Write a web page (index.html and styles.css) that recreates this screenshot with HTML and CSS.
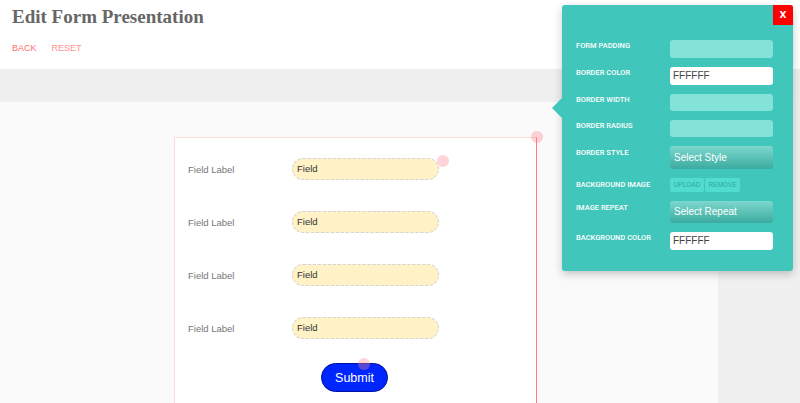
FILE: index.html
```html
<!DOCTYPE html>
<html>
<head>
<meta charset="utf-8">
<link rel="stylesheet" href="styles.css">
</head>
<body>
<header class="header">
  <h1 class="title">Edit Form Presentation</h1>
  <nav class="nav">
    <a class="nav-link back">BACK</a>
    <a class="nav-link reset">RESET</a>
  </nav>
</header>
<div class="band"></div>
<div class="main">
  <div class="canvas">
    <div class="form-card">
      <span class="dot dot-card"></span>
      <div class="row">
        <span class="flabel">Field Label</span>
        <div class="finput">Field<span class="dot dot-field"></span></div>
      </div>
      <div class="row">
        <span class="flabel">Field Label</span>
        <div class="finput">Field</div>
      </div>
      <div class="row">
        <span class="flabel">Field Label</span>
        <div class="finput">Field</div>
      </div>
      <div class="row">
        <span class="flabel">Field Label</span>
        <div class="finput">Field</div>
      </div>
      <div class="submit-wrap">
        <button class="submit">Submit<span class="dot dot-submit"></span></button>
      </div>
    </div>
  </div>
  <div class="side"></div>
</div>

<div class="panel">
  <button class="close">X</button>
  <div class="pgrid">
    <span class="plabel">FORM PADDING</span>
    <div class="pinput"></div>
    <span class="plabel">BORDER COLOR</span>
    <div class="pinput white">FFFFFF</div>
    <span class="plabel">BORDER WIDTH</span>
    <div class="pinput h17"></div>
    <span class="plabel">BORDER RADIUS</span>
    <div class="pinput h17"></div>
    <span class="plabel sel">BORDER STYLE</span>
    <div class="pselect tall">Select Style</div>
    <span class="plabel small">BACKGROUND IMAGE</span>
    <div class="pbtns"><span class="pbtn">UPLOAD</span><span class="pbtn">REMOVE</span></div>
    <span class="plabel sel">IMAGE REPEAT</span>
    <div class="pselect">Select Repeat</div>
    <span class="plabel">BACKGROUND COLOR</span>
    <div class="pinput white">FFFFFF</div>
  </div>
</div>
</body>
</html>
```
FILE: styles.css
```css
* { box-sizing: border-box; }
html, body { margin: 0; padding: 0; }
body {
  width: 800px;
  height: 403px;
  overflow: hidden;
  font-family: "Liberation Sans", Arial, sans-serif;
  background: #fafafa;
  position: relative;
}
.header {
  height: 69px;
  background: #fff;
  padding: 7px 12px 0;
}
.title {
  margin: 0;
  font-family: "Liberation Serif", "Times New Roman", serif;
  font-weight: bold;
  font-size: 19px;
  line-height: 20px;
  color: #666;
}
.nav {
  margin-top: 16px;
  display: flex;
  gap: 15px;
  font-size: 9px;
  line-height: 10px;
}
.nav-link { color: #ff7070; }
.nav-link.reset { color: #ff9090; }
.band {
  height: 33px;
  background: #efefef;
}
.main {
  display: flex;
  height: 301px;
}
.canvas {
  width: 718px;
  background: #fafafa;
  padding: 35px 0 0 174px;
}
.side {
  flex: 1;
  background: #f0f0f0;
}
.form-card {
  position: relative;
  width: 363px;
  height: 266px;
  background: #fff;
  border: 1px solid #ffdcdc;
  border-right: 1px solid #ff7a7a;
  border-bottom: none;
  padding: 20px 0 0 13px;
}
.row {
  display: flex;
  align-items: center;
  height: 22px;
  margin-bottom: 31px;
}
.flabel {
  width: 104px;
  font-size: 9.5px;
  color: #777;
}
.finput {
  position: relative;
  width: 147px;
  height: 22px;
  background: #fef2c6;
  border: 1px dashed #d4d2dc;
  border-radius: 11px;
  font-size: 9.5px;
  color: #333;
  padding-left: 4px;
  line-height: 19px;
}
.submit-wrap {
  display: flex;
  justify-content: center;
  margin-top: -7px;
  padding-right: 15px;
}
.submit {
  position: relative;
  width: 67px;
  height: 29px;
  background: #0026ff;
  border: 1px solid #0010a0;
  border-radius: 15px;
  color: #fff;
  font-family: "Liberation Sans", Arial, sans-serif;
  font-size: 12.5px;
  padding: 0;
}
.dot {
  position: absolute;
  width: 12px;
  height: 12px;
  border-radius: 50%;
  background: rgba(255, 130, 140, 0.35);
}
.dot-card { top: -7px; right: -7px; }
.dot-field { top: -4px; right: -11px; }
.dot-submit { top: -6px; left: 36px; }

.panel {
  position: absolute;
  left: 562px;
  top: 5px;
  width: 231px;
  height: 266px;
  background: #40c6ba;
  border-radius: 3px;
  box-shadow: 0 3px 8px rgba(0, 0, 0, 0.22);
  padding: 35px 0 0 14px;
}
.panel::before {
  content: "";
  position: absolute;
  left: -10px;
  top: 93px;
  border-style: solid;
  border-width: 10px 10px 10px 0;
  border-color: transparent #40c6ba transparent transparent;
}
.close {
  position: absolute;
  top: 0;
  right: 0;
  width: 20px;
  height: 20px;
  background: #ff0000;
  border: none;
  border-top-right-radius: 3px;
  color: #fff;
  font-family: "DejaVu Sans", sans-serif;
  font-weight: bold;
  font-size: 9px;
  padding: 0;
}
.pgrid {
  display: grid;
  grid-template-columns: 94px 103px;
  row-gap: 9px;
  align-items: start;
}
.plabel {
  font-family: Roboto, "Liberation Sans", sans-serif;
  font-weight: 500;
  font-size: 7.5px;
  color: #fff;
  line-height: 9px;
  padding-top: 1px;
}
.plabel.sel { padding-top: 2px; }
.plabel.small { padding-top: 2px; }
.pinput {
  height: 18px;
  border-radius: 3px;
  background: #83e3d9;
}
.pinput.h17 { height: 17px; }
.pinput.white {
  background: #fff;
  font-size: 10px;
  color: #444;
  padding-left: 3px;
  line-height: 18px;
}
.pselect {
  height: 22px;
  border-radius: 3px;
  background: linear-gradient(#7dd8ce, #3cab9f);
  color: #fff;
  font-size: 10px;
  line-height: 22px;
  padding-left: 4px;
}
.pselect.tall { height: 23px; line-height: 23px; }
.pbtns {
  display: flex;
  gap: 1px;
  height: 14px;
}
.pbtn {
  width: 34px;
  height: 14px;
  border-radius: 2px;
  background: #52dccf;
  color: #2ba89b;
  font-size: 6.5px;
  line-height: 14px;
  text-align: center;
}
.pbtn + .pbtn { width: 35px; }
```
